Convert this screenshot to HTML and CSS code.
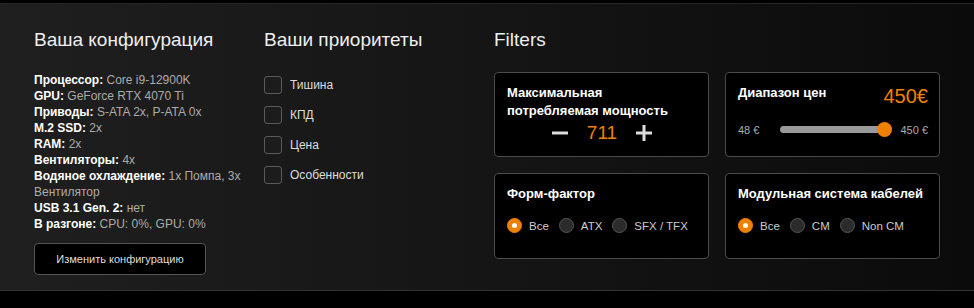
FILE: index.html
```html
<!DOCTYPE html>
<html lang="ru">
<head>
    <meta charset="UTF-8">
    <meta name="viewport" content="width=device-width, initial-scale=1.0">
    <title>Конфигуратор</title>
    <link rel="stylesheet" href="styles.css">
</head>
<body>
    <section class="panel">
        <div class="col col-config">
            <h2 class="col-title">Ваша конфигурация</h2>
            <ul class="spec-list">
                <li><b>Процессор:</b> Core i9-12900K</li>
                <li><b>GPU:</b> GeForce RTX 4070 Ti</li>
                <li><b>Приводы:</b> S-ATA 2x, P-ATA 0x</li>
                <li><b>M.2 SSD:</b> 2x</li>
                <li><b>RAM:</b> 2x</li>
                <li><b>Вентиляторы:</b> 4x</li>
                <li><b>Водяное охлаждение:</b> 1x Помпа, 3x Вентилятор</li>
                <li><b>USB 3.1 Gen. 2:</b> нет</li>
                <li><b>В разгоне:</b> CPU: 0%, GPU: 0%</li>
            </ul>
            <button class="edit-btn" type="button">Изменить конфигурацию</button>
        </div>

        <div class="col col-prio">
            <h2 class="col-title">Ваши приоритеты</h2>
            <ul class="check-list">
                <li><span class="check"></span>Тишина</li>
                <li><span class="check"></span>КПД</li>
                <li><span class="check"></span>Цена</li>
                <li><span class="check"></span>Особенности</li>
            </ul>
        </div>

        <div class="col col-filters">
            <h2 class="col-title">Filters</h2>
            <div class="cards">
                <div class="card">
                    <h3 class="card-title">Максимальная<br>потребляемая мощность</h3>
                    <div class="stepper">
                        <svg class="step-icon" width="16" height="16" viewBox="0 0 16 16"><path d="M0 8h16" stroke="#ddd" stroke-width="3"/></svg>
                        <span class="step-value">711</span>
                        <svg class="step-icon" width="16" height="16" viewBox="0 0 16 16"><path d="M0 8h16M8 0v16" stroke="#ddd" stroke-width="3"/></svg>
                    </div>
                </div>

                <div class="card">
                    <div class="price-head">
                        <h3 class="card-title">Диапазон цен</h3>
                        <span class="price">450€</span>
                    </div>
                    <div class="range">
                        <span class="range-label">48 €</span>
                        <div class="track"><span class="thumb"></span></div>
                        <span class="range-label">450 €</span>
                    </div>
                </div>

                <div class="card">
                    <h3 class="card-title">Форм-фактор</h3>
                    <div class="radios">
                        <span class="radio on"></span><span class="radio-label">Все</span>
                        <span class="radio"></span><span class="radio-label">ATX</span>
                        <span class="radio"></span><span class="radio-label">SFX / TFX</span>
                    </div>
                </div>

                <div class="card">
                    <h3 class="card-title">Модульная система кабелей</h3>
                    <div class="radios">
                        <span class="radio on"></span><span class="radio-label">Все</span>
                        <span class="radio"></span><span class="radio-label">CM</span>
                        <span class="radio"></span><span class="radio-label">Non CM</span>
                    </div>
                </div>
            </div>
        </div>
    </section>
</body>
</html>
```

FILE: styles.css
```css
:root {
    --accent: #f08000;
    --text: #f0f0f0;
    --muted: #ababab;
    --border: #4a4a4a;
}

* {
    margin: 0;
    padding: 0;
    box-sizing: border-box;
}

body {
    font-family: "Liberation Sans", Arial, sans-serif;
    background: #000;
    color: var(--text);
    padding-top: 3px;
}

.panel {
    height: 288px;
    display: flex;
    padding: 24px 0 0 34px;
    background: linear-gradient(90deg, #1f1f1f 0%, #151515 50%, #0b0b0b 100%);
    border-top: 1px solid #262626;
    border-bottom: 1px solid #333;
}

.col-config {
    width: 230px;
}

.col-prio {
    width: 230px;
}

.col-title {
    font-size: 19px;
    font-weight: normal;
    line-height: 24px;
    color: #eee;
    margin-bottom: 20px;
}

.spec-list {
    list-style: none;
    width: 210px;
    font-size: 12px;
    line-height: 16px;
    color: var(--muted);
}

.spec-list b {
    color: #fff;
}

.edit-btn {
    margin-top: 11px;
    width: 172px;
    height: 32px;
    background: #000;
    border: 1px solid #555;
    border-radius: 4px;
    color: #ddd;
    font-family: inherit;
    font-size: 11px;
}

.check-list {
    list-style: none;
    display: flex;
    flex-direction: column;
    gap: 12px;
    padding-top: 4px;
    font-size: 12px;
    color: #ddd;
}

.check-list li {
    display: flex;
    align-items: center;
    gap: 8px;
    height: 18px;
}

.check {
    width: 18px;
    height: 18px;
    border: 1px solid #5a5a5a;
    border-radius: 3px;
    background: #1c1c1c;
}

.cards {
    display: grid;
    grid-template-columns: 215px 215px;
    grid-template-rows: 85px 86px;
    gap: 16px;
}

.card {
    background: #000;
    border: 1px solid var(--border);
    border-radius: 4px;
    padding: 11px 11px 0 12px;
}

.card-title {
    font-size: 13px;
    line-height: 18px;
    font-weight: bold;
    color: #fff;
}

.stepper {
    display: flex;
    align-items: center;
    justify-content: center;
    gap: 19px;
    margin-top: 2px;
    height: 22px;
}

.step-value {
    font-size: 19px;
    color: var(--accent);
}

.price-head {
    display: flex;
    justify-content: space-between;
    align-items: flex-start;
}

.price {
    font-size: 20px;
    line-height: 24px;
    color: var(--accent);
}

.range {
    display: flex;
    align-items: center;
    margin-top: 14px;
    height: 15px;
}

.range-label {
    font-size: 11px;
    color: var(--muted);
}

.track {
    position: relative;
    margin: 0 12px 0 21px;
    flex: 1;
    height: 7px;
    background: #9a9a9a;
    border-radius: 4px;
}

.thumb {
    position: absolute;
    right: -4px;
    top: 50%;
    width: 15px;
    height: 15px;
    margin-top: -7.5px;
    border-radius: 50%;
    background: var(--accent);
}

.radios {
    display: flex;
    align-items: center;
    margin-top: 15px;
    font-size: 11.5px;
    color: #ccc;
    white-space: nowrap;
}

.radio {
    flex: none;
    width: 15px;
    height: 15px;
    border-radius: 50%;
    background: #2b2b2b;
    border: 1px solid #555;
    margin-right: 7px;
}

.radio.on {
    background: var(--accent);
    border-color: var(--accent);
    display: flex;
    align-items: center;
    justify-content: center;
}

.radio.on::after {
    content: "";
    width: 5px;
    height: 5px;
    border-radius: 50%;
    background: #fff;
}

.radio-label {
    margin-right: 10px;
}
```
